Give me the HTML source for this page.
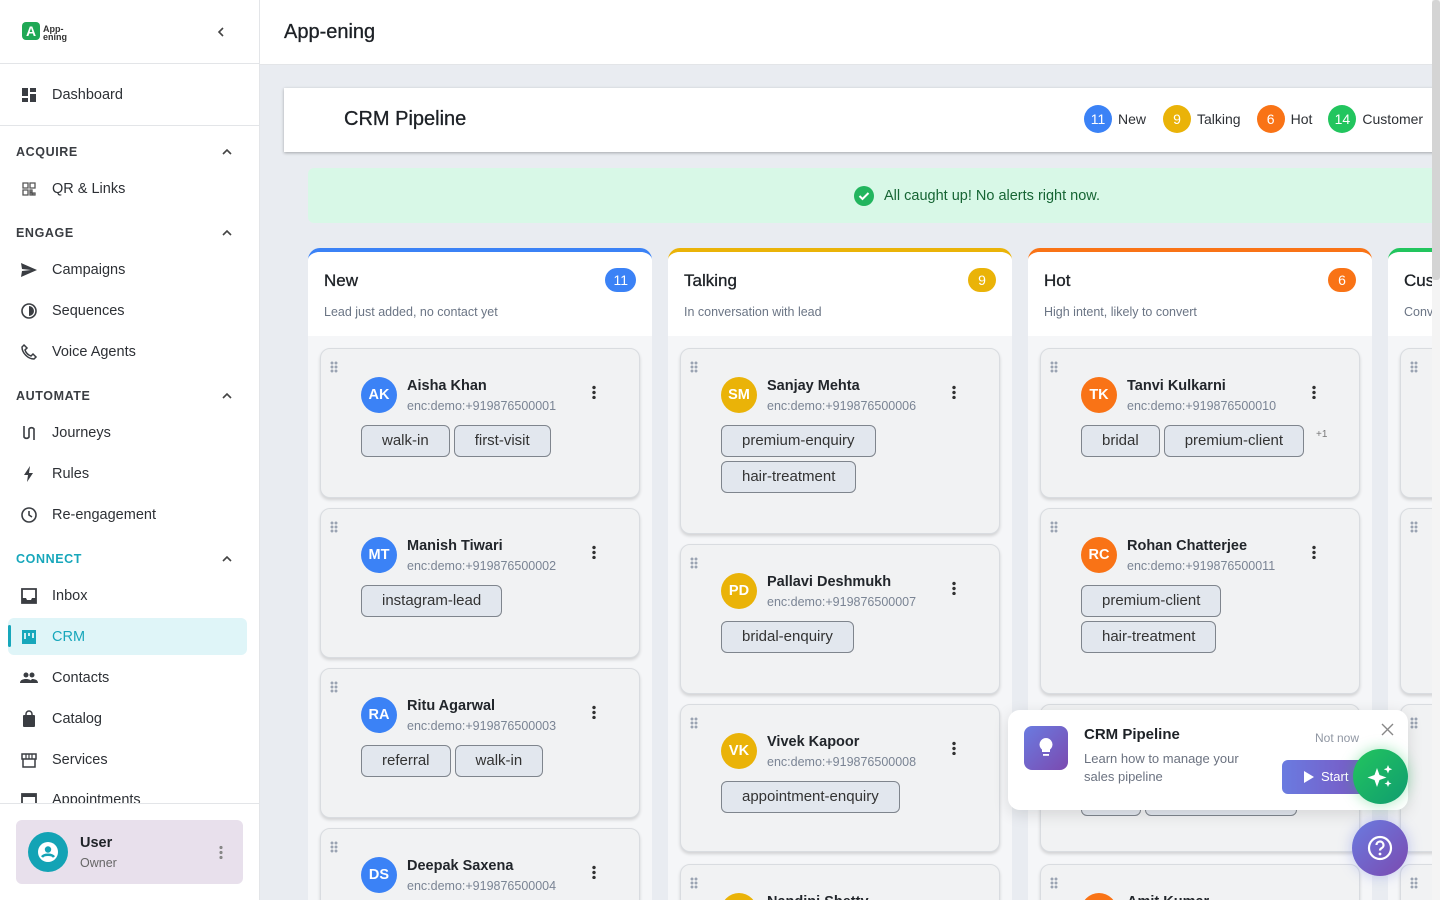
<!DOCTYPE html>
<html><head><meta charset="utf-8"><style>
*{box-sizing:border-box;margin:0;padding:0}
html,body{overflow:hidden}
body{width:1440px;height:900px;overflow:hidden;font-family:"Liberation Sans",sans-serif;background:#fff;position:relative;color:#1f2328}
.sb{position:absolute;left:0;top:0;width:260px;height:900px;border-right:1px solid #e3e5e8;background:#fff}
.abs{position:absolute}
.nav{position:absolute;left:20px;font-size:14.5px;color:#2d3035;display:flex;align-items:center;gap:14px}
.nav svg{width:18px;height:18px}
.sec{position:absolute;left:16px;font-size:12.5px;font-weight:bold;letter-spacing:.6px;color:#3a3d42}
.chev{position:absolute;left:222px;width:10px;height:10px}
.main{position:absolute;left:260px;top:0;width:1172px;height:900px;background:#e9ecf1;overflow:hidden}
.col{position:absolute;top:248px;width:344px;height:652px;border-radius:12px 12px 0 0;background:#f5f6f8;overflow:hidden}
.colh{height:84px;background:#fff;padding:19px 16px 0 16px;position:relative}
.colh h3{font-size:17px;font-weight:normal;color:#1d2126;-webkit-text-stroke:.3px #1d2126}
.colh p{font-size:12.5px;color:#6b7585;margin-top:14px}
.cnt{position:absolute;right:16px;top:16px;height:24px;min-width:28px;border-radius:12px;color:#fff;font-size:14px;text-align:center;line-height:24px;padding:0 8px}
.card{position:absolute;left:12px;width:320px;background:#f1f2f3;border:1px solid #d9dce0;border-radius:10px;box-shadow:0 2px 3px rgba(0,0,0,.15)}
.dots{position:absolute;left:9px;top:12px;width:8px;height:12px;background:radial-gradient(circle,#9aa3b2 1.3px,transparent 1.6px) 0 0/4px 4px}
.av{position:absolute;left:40px;top:28px;width:36px;height:36px;border-radius:50%;color:#fff;font-size:14.5px;font-weight:bold;text-align:center;line-height:36px}
.nm{position:absolute;left:86px;top:29px;font-size:14.5px;font-weight:bold;color:#22262b}
.ph{position:absolute;left:86px;top:50px;font-size:12.5px;color:#7a8494}
.keb{position:absolute;left:271px;top:36px;width:4px;height:14px;background:radial-gradient(circle,#333 1.6px,transparent 1.9px) 0 0/4px 5px}
.tags{position:absolute;left:40px;top:76px;width:270px;display:flex;flex-wrap:wrap;gap:4px}
.tag{height:32px;border:1px solid #7f858d;border-radius:6px;background:#e2e7ee;font-size:15px;color:#333;padding:0 20px;line-height:30px}
.more{font-size:10px;color:#777;margin:4px 0 0 8px}
</style></head><body>
<div class="sb">
  <div class="abs" style="left:22px;top:22px;width:18px;height:18px;background:#1fa855;border-radius:4px;color:#fff;font-weight:bold;font-size:14px;text-align:center;line-height:18px">A</div>
  <div class="abs" style="left:43px;top:25px;font-size:9px;line-height:8px;font-weight:bold;color:#333">App-<br>ening</div>
  <svg class="abs" style="left:216px;top:27px" width="10" height="10" viewBox="0 0 10 10"><path d="M7 1L3 5l4 4" fill="none" stroke="#444" stroke-width="1.6"/></svg>
  <div class="abs" style="left:0;top:63px;width:259px;height:1px;background:#e3e5e8"></div>
  <div class="nav" style="top:86px"><svg viewBox="0 0 18 18"><path d="M2 2h6v8H2zM10 2h6v4h-6zM10 8h6v8h-6zM2 12h6v4H2z" fill="#3a3d42"/></svg>Dashboard</div>
  <div class="abs" style="left:0;top:125px;width:259px;height:1px;background:#e3e5e8"></div>
  <div class="sec" style="top:145px">ACQUIRE</div><svg class="chev" style="top:147px" viewBox="0 0 10 10"><path d="M1 7l4-4 4 4" fill="none" stroke="#444" stroke-width="1.6"/></svg>
  <div class="nav" style="top:180px"><svg viewBox="0 0 18 18"><path d="M3 3h5v5H3zM10 3h5v5h-5zM3 10h5v5H3zM10 10h2v2h-2zM13 13h2v2h-2zM10 13h2v2h-2z" fill="none" stroke="#555" stroke-width="1.3"/></svg>QR &amp; Links</div>
  <div class="sec" style="top:226px">ENGAGE</div><svg class="chev" style="top:228px" viewBox="0 0 10 10"><path d="M1 7l4-4 4 4" fill="none" stroke="#444" stroke-width="1.6"/></svg>
  <div class="nav" style="top:261px"><svg viewBox="0 0 18 18"><path d="M1 2l16 7-16 7 1-6 9-1-9-1z" fill="#3a3d42"/></svg>Campaigns</div>
  <div class="nav" style="top:302px"><svg viewBox="0 0 18 18"><circle cx="9" cy="9" r="7" fill="none" stroke="#3a3d42" stroke-width="1.6"/><path d="M9 4a5 5 0 0 1 0 10z" fill="#3a3d42"/></svg>Sequences</div>
  <div class="nav" style="top:343px"><svg viewBox="0 0 18 18"><path d="M4 2l3 3-2 2c1 3 3 5 6 6l2-2 3 3-2 2C8 16 2 10 2 4z" fill="none" stroke="#3a3d42" stroke-width="1.5"/></svg>Voice Agents</div>
  <div class="sec" style="top:389px">AUTOMATE</div><svg class="chev" style="top:391px" viewBox="0 0 10 10"><path d="M1 7l4-4 4 4" fill="none" stroke="#444" stroke-width="1.6"/></svg>
  <div class="nav" style="top:424px"><svg viewBox="0 0 18 18"><path d="M4 2v11a3 3 0 0 0 5 0V5a3 3 0 0 1 5 0v11" fill="none" stroke="#3a3d42" stroke-width="1.6"/></svg>Journeys</div>
  <div class="nav" style="top:465px"><svg viewBox="0 0 18 18"><path d="M10 1L4 10h4l-1 7 6-9H9z" fill="#3a3d42"/></svg>Rules</div>
  <div class="nav" style="top:506px"><svg viewBox="0 0 18 18"><circle cx="9" cy="9" r="7" fill="none" stroke="#3a3d42" stroke-width="1.6"/><path d="M9 5v4l3 2" fill="none" stroke="#3a3d42" stroke-width="1.6"/></svg>Re-engagement</div>
  <div class="sec" style="top:552px;color:#17a7bb">CONNECT</div><svg class="chev" style="top:554px" viewBox="0 0 10 10"><path d="M1 7l4-4 4 4" fill="none" stroke="#444" stroke-width="1.6"/></svg>
  <div class="nav" style="top:587px"><svg viewBox="0 0 18 18"><path d="M2 2h14v14H2z" fill="none" stroke="#3a3d42" stroke-width="1.8"/><path d="M2 11h4l1 2h4l1-2h4v5H2z" fill="#3a3d42"/></svg>Inbox</div>
  <div class="abs" style="left:8px;top:618px;width:239px;height:37px;background:#dff5f8;border-radius:6px"></div>
  <div class="abs" style="left:8px;top:625px;width:3px;height:22px;background:#17a7bb;border-radius:2px"></div>
  <div class="nav" style="top:628px;color:#17a7bb"><svg viewBox="0 0 18 18"><rect x="2" y="2" width="14" height="14" fill="#17a7bb"/><path d="M5 5v6M9 5v3M13 5v5" stroke="#fff" stroke-width="1.6"/></svg>CRM</div>
  <div class="nav" style="top:669px"><svg viewBox="0 0 18 18"><circle cx="6" cy="6" r="2.5" fill="#3a3d42"/><circle cx="12" cy="6" r="2.5" fill="#3a3d42"/><path d="M0 14c0-3 3-4 6-4s6 1 6 4zM10 14c0-2 1-3 2-4 3 0 6 1 6 4z" fill="#3a3d42"/></svg>Contacts</div>
  <div class="nav" style="top:710px"><svg viewBox="0 0 18 18"><rect x="3" y="5" width="12" height="12" rx="1" fill="#3a3d42"/><path d="M6 6V4a3 3 0 0 1 6 0v2" fill="none" stroke="#3a3d42" stroke-width="1.5"/></svg>Catalog</div>
  <div class="nav" style="top:751px"><svg viewBox="0 0 18 18"><path d="M3 8v8h12V8M2 3h14v5H2z" fill="none" stroke="#3a3d42" stroke-width="1.5"/><path d="M6 3v5M9 3v5M12 3v5" stroke="#3a3d42" stroke-width="1.2"/></svg>Services</div>
  <div class="abs" style="left:0;top:780px;width:259px;height:23px;overflow:hidden"><div class="nav" style="top:11px"><svg viewBox="0 0 18 18"><rect x="2" y="3" width="14" height="13" fill="none" stroke="#3a3d42" stroke-width="1.8"/><path d="M2 3h14v3H2z" fill="#3a3d42"/></svg>Appointments</div></div>
  <div class="abs" style="left:0;top:803px;width:259px;height:1px;background:#e3e5e8"></div>
  <div class="abs" style="left:16px;top:820px;width:227px;height:64px;background:#e8e0ec;border-radius:6px"></div>
  <div class="abs" style="left:28px;top:832px;width:40px;height:40px;border-radius:50%;background:#13a3b5"></div>
  <svg class="abs" style="left:37px;top:841px" width="22" height="22" viewBox="0 0 22 22"><circle cx="11" cy="11" r="10" fill="#fff"/><circle cx="11" cy="8.5" r="3.2" fill="#13a3b5"/><path d="M5 16c2-3 10-3 12 0" fill="none" stroke="#13a3b5" stroke-width="2.5"/></svg>
  <div class="abs" style="left:80px;top:835px;font-size:14.5px;font-weight:bold">User</div>
  <div class="abs" style="left:80px;top:856px;font-size:12.5px;color:#666">Owner</div>
  <div class="abs" style="left:219px;top:845px;width:4px;height:14px;background:radial-gradient(circle,#888 1.5px,transparent 1.8px) 0 0/4px 5px"></div>
</div>

<div class="abs" style="left:260px;top:0;width:1172px;height:65px;background:#fff;border-bottom:1px solid #e3e5e8"></div>
<div class="abs" style="left:284px;top:21px;font-size:20px;color:#1d2126;-webkit-text-stroke:.3px #1d2126">App-ening</div>

<div class="main" style="top:65px;height:835px">
  <div class="abs" style="left:24px;top:23px;width:1160px;height:64px;background:#fff;box-shadow:0 1px 3px rgba(0,0,0,.3)"></div>
  <div class="abs" style="left:84px;top:43px;font-size:20px;color:#1d2126;-webkit-text-stroke:.3px #1d2126">CRM Pipeline</div>
  <div class="abs" style="left:824px;top:40px;display:flex;align-items:center;font-size:14px;color:#2d3035">
    <span style="width:28px;height:28px;border-radius:50%;background:#3b82f6;color:#fff;text-align:center;line-height:28px;margin-right:6px">11</span>New
    <span style="width:28px;height:28px;border-radius:50%;background:#eab308;color:#fff;text-align:center;line-height:28px;margin:0 6px 0 17px">9</span>Talking
    <span style="width:28px;height:28px;border-radius:50%;background:#f97316;color:#fff;text-align:center;line-height:28px;margin:0 6px 0 16px">6</span>Hot
    <span style="width:28px;height:28px;border-radius:50%;background:#22c55e;color:#fff;text-align:center;line-height:28px;margin:0 6px 0 16px">14</span>Customer
  </div>
  <div class="abs" style="left:48px;top:103px;width:1140px;height:55px;background:#d8f8e7;border-radius:6px"></div>
  <svg class="abs" style="left:594px;top:121px" width="20" height="20" viewBox="0 0 20 20"><circle cx="10" cy="10" r="10" fill="#22b55e"/><path d="M5.5 10l3 3 6-6" fill="none" stroke="#fff" stroke-width="2"/></svg>
  <div class="abs" style="left:624px;top:123px;font-size:14.5px;color:#166534">All caught up! No alerts right now.</div>
</div>

<div class="abs" style="left:0;top:0;width:1432px;height:900px;overflow:hidden;pointer-events:none">
<div class="col" style="left:308px;border-top:4px solid #3b82f6">
 <div class="colh"><h3>New</h3><p>Lead just added, no contact yet</p><div class="cnt" style="background:#3b82f6">11</div></div>
 <div class="card" style="top:96px;height:150px"><div class="dots"></div><div class="av" style="background:#3b82f6">AK</div><div class="nm">Aisha Khan</div><div class="ph">enc:demo:+919876500001</div><div class="keb"></div><div class="tags"><span class="tag">walk-in</span><span class="tag">first-visit</span></div></div>
 <div class="card" style="top:256px;height:150px"><div class="dots"></div><div class="av" style="background:#3b82f6">MT</div><div class="nm">Manish Tiwari</div><div class="ph">enc:demo:+919876500002</div><div class="keb"></div><div class="tags"><span class="tag">instagram-lead</span></div></div>
 <div class="card" style="top:416px;height:150px"><div class="dots"></div><div class="av" style="background:#3b82f6">RA</div><div class="nm">Ritu Agarwal</div><div class="ph">enc:demo:+919876500003</div><div class="keb"></div><div class="tags"><span class="tag">referral</span><span class="tag">walk-in</span></div></div>
 <div class="card" style="top:576px;height:150px"><div class="dots"></div><div class="av" style="background:#3b82f6">DS</div><div class="nm">Deepak Saxena</div><div class="ph">enc:demo:+919876500004</div><div class="keb"></div></div>
</div>
<div class="col" style="left:668px;border-top:4px solid #eab308">
 <div class="colh"><h3>Talking</h3><p>In conversation with lead</p><div class="cnt" style="background:#eab308">9</div></div>
 <div class="card" style="top:96px;height:186px"><div class="dots"></div><div class="av" style="background:#eab308">SM</div><div class="nm">Sanjay Mehta</div><div class="ph">enc:demo:+919876500006</div><div class="keb"></div><div class="tags"><span class="tag">premium-enquiry</span><span class="tag">hair-treatment</span></div></div>
 <div class="card" style="top:292px;height:150px"><div class="dots"></div><div class="av" style="background:#eab308">PD</div><div class="nm">Pallavi Deshmukh</div><div class="ph">enc:demo:+919876500007</div><div class="keb"></div><div class="tags"><span class="tag">bridal-enquiry</span></div></div>
 <div class="card" style="top:452px;height:148px"><div class="dots"></div><div class="av" style="background:#eab308">VK</div><div class="nm">Vivek Kapoor</div><div class="ph">enc:demo:+919876500008</div><div class="keb"></div><div class="tags"><span class="tag">appointment-enquiry</span></div></div>
 <div class="card" style="top:612px;height:150px"><div class="dots"></div><div class="av" style="background:#eab308">NS</div><div class="nm">Nandini Shetty</div><div class="ph">enc:demo:+919876500009</div><div class="keb"></div></div>
</div>
<div class="col" style="left:1028px;border-top:4px solid #f97316">
 <div class="colh"><h3>Hot</h3><p>High intent, likely to convert</p><div class="cnt" style="background:#f97316">6</div></div>
 <div class="card" style="top:96px;height:150px"><div class="dots"></div><div class="av" style="background:#f97316">TK</div><div class="nm">Tanvi Kulkarni</div><div class="ph">enc:demo:+919876500010</div><div class="keb"></div><div class="tags"><span class="tag">bridal</span><span class="tag">premium-client</span><span class="more">+1</span></div></div>
 <div class="card" style="top:256px;height:186px"><div class="dots"></div><div class="av" style="background:#f97316">RC</div><div class="nm">Rohan Chatterjee</div><div class="ph">enc:demo:+919876500011</div><div class="keb"></div><div class="tags"><span class="tag">premium-client</span><span class="tag">hair-treatment</span></div></div>
 <div class="card" style="top:452px;height:148px"><div class="tags" style="top:79px"><span class="tag" style="width:60px"></span><span class="tag" style="width:152px"></span></div></div>
 <div class="card" style="top:612px;height:150px"><div class="dots"></div><div class="av" style="background:#f97316">AK</div><div class="nm">Amit Kumar</div><div class="ph">enc:demo:+919876500012</div><div class="keb"></div></div>
</div>
<div class="col" style="left:1388px;border-top:4px solid #22c55e">
 <div class="colh"><h3>Customer</h3><p>Converted customer</p></div>
 <div class="card" style="top:96px;height:150px"><div class="dots"></div></div>
 <div class="card" style="top:256px;height:186px"><div class="dots"></div></div>
 <div class="card" style="top:452px;height:148px"><div class="dots"></div></div>
 <div class="card" style="top:612px;height:150px"><div class="dots"></div></div>
</div>
</div>

<div class="abs" style="left:1008px;top:710px;width:400px;height:100px;background:#fff;border-radius:12px;box-shadow:0 4px 16px rgba(0,0,0,.12)"></div>
<div class="abs" style="left:1024px;top:726px;width:44px;height:44px;border-radius:8px;background:linear-gradient(135deg,#6a7be0,#7b4ab0)"></div>
<svg class="abs" style="left:1036px;top:736px" width="20" height="24" viewBox="0 0 20 24"><path d="M10 2a6.5 6.5 0 0 0-4 11.6V16h8v-2.4A6.5 6.5 0 0 0 10 2z" fill="#fff"/><rect x="7" y="18" width="6" height="1.8" fill="#fff"/></svg>
<div class="abs" style="left:1084px;top:726px;font-size:15px;font-weight:bold;color:#1d2126">CRM Pipeline</div>
<div class="abs" style="left:1084px;top:750px;font-size:13px;color:#6b7280;line-height:18px;width:180px">Learn how to manage your sales pipeline</div>
<div class="abs" style="left:1315px;top:731px;font-size:12px;color:#9097a3">Not now</div>
<svg class="abs" style="left:1381px;top:723px" width="13" height="13" viewBox="0 0 13 13"><path d="M1 1l11 11M12 1L1 12" stroke="#888" stroke-width="1.4"/></svg>
<div class="abs" style="left:1282px;top:760px;width:90px;height:34px;border-radius:6px;background:linear-gradient(90deg,#6a7be0,#7b55c0)"></div>
<svg class="abs" style="left:1304px;top:771px" width="10" height="12" viewBox="0 0 10 12"><path d="M0 0l10 6-10 6z" fill="#fff"/></svg>
<div class="abs" style="left:1321px;top:769px;font-size:13px;color:#fff">Start</div>
<div class="abs" style="left:1353px;top:749px;width:55px;height:55px;border-radius:50%;background:linear-gradient(135deg,#22c55e,#109c70);box-shadow:0 0 14px rgba(34,197,94,.4)"></div>
<svg class="abs" style="left:1366px;top:762px" width="30" height="30" viewBox="0 0 30 30"><path d="M11 6l2.5 7 7 2.5-7 2.5L11 25l-2.5-7-7-2.5 7-2.5z" fill="#fff"/><path d="M22 3l1.2 3 3 1.2-3 1.2L22 11.5l-1.2-3-3-1.2 3-1.2zM22 18l1 2.5 2.5 1-2.5 1-1 2.5-1-2.5-2.5-1 2.5-1z" fill="#fff"/></svg>
<div class="abs" style="left:1352px;top:820px;width:56px;height:56px;border-radius:50%;background:linear-gradient(135deg,#6a7be0,#7b4ab0);box-shadow:0 0 14px rgba(106,123,224,.4)"></div>
<svg class="abs" style="left:1367px;top:835px" width="26" height="26" viewBox="0 0 26 26"><circle cx="13" cy="13" r="11" fill="none" stroke="#fff" stroke-width="2.2"/><path d="M9.5 10a3.5 3.5 0 1 1 5 3.2c-1 .5-1.5 1.2-1.5 2.3" fill="none" stroke="#fff" stroke-width="2.2"/><circle cx="13" cy="19" r="1.4" fill="#fff"/></svg>

<div class="abs" style="left:1432px;top:0;width:8px;height:900px;background:#f4f4f4"></div>
<div class="abs" style="left:1432px;top:0;width:8px;height:280px;background:#d4d4d4;border-radius:3px"></div>
</body></html>
